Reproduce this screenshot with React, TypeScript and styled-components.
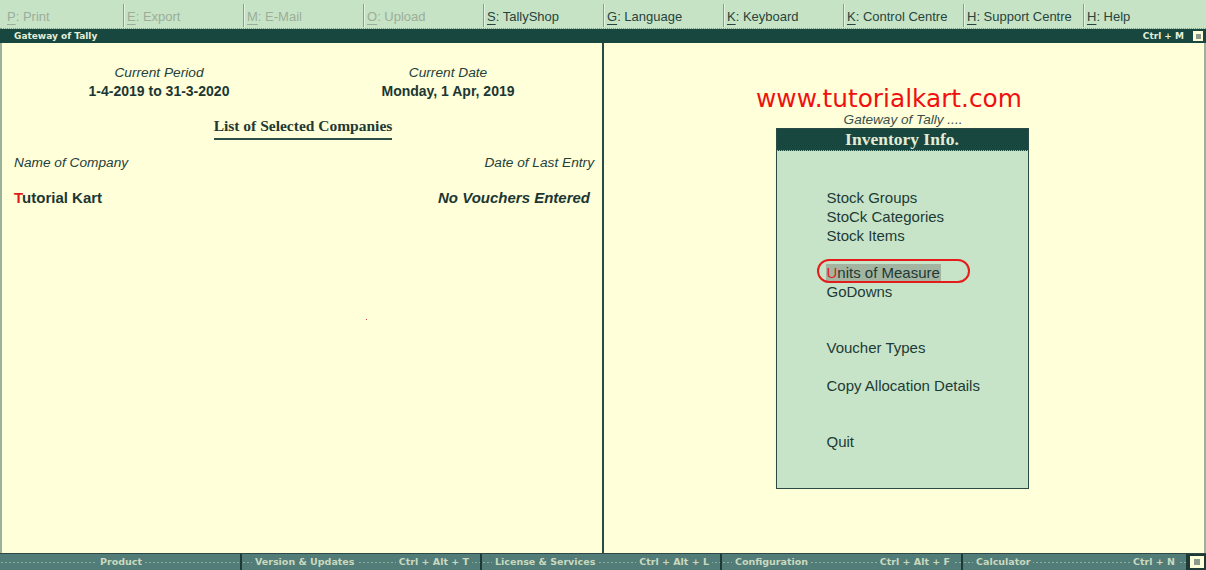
import React from "react";
import styled, { createGlobalStyle } from "styled-components";

const Global = createGlobalStyle`
  html, body { margin: 0; padding: 0; }
  body { width: 1206px; height: 570px; overflow: hidden; background: #ffffd9; font-family: "Liberation Sans", Arial, sans-serif; }
`;

const Screen = styled.div`
  width: 1206px;
  height: 570px;
  display: flex;
  flex-direction: column;
  background: #ffffd9;
`;

const Toolbar = styled.div`
  height: 28px;
  display: flex;
  padding-left: 4px;
  background: #c7e3c5;
  border-bottom: 1px dotted #7d9a80;
  flex: none;
`;

const ToolButton = styled.div<{ $disabled?: boolean; $last?: boolean }>`
  width: 120px;
  box-sizing: border-box;
  display: flex;
  align-items: center;
  padding-left: 3px;
  padding-top: 2px;
  font-size: 13px;
  color: ${(p) => (p.$disabled ? "#9cad9a" : "#27443e")};
  border-right: ${(p) => (p.$last ? "none" : "1px solid #8c9e8a")};
  box-shadow: ${(p) => (p.$last ? "none" : "1px 0 0 #e4f2e2")};
  margin-top: 4px;
  margin-bottom: 1px;
`;

const Key = styled.span`
  text-decoration: underline;
  text-underline-offset: 3px;
`;

const TitleBar = styled.div`
  height: 14px;
  flex: none;
  background: #18473f;
  display: flex;
  align-items: center;
  justify-content: space-between;
  padding: 0 3px 0 14px;
  font-family: "DejaVu Sans", Verdana, sans-serif;
  font-size: 9px;
  font-weight: bold;
  color: #e4eed8;
`;

const TitleRight = styled.div`
  display: flex;
  align-items: center;
  gap: 9px;
`;

const SquareBtn = styled.div`
  width: 10px;
  height: 10px;
  box-sizing: border-box;
  background: #ffffd9;
  display: flex;
  align-items: center;
  justify-content: center;
  &::after {
    content: "";
    width: 5px;
    height: 5px;
    background: #8e9a8e;
  }
`;

const Main = styled.div`
  flex: 1;
  display: flex;
  border-left: 2px solid #9bb29b;
  border-right: 2px solid #9bb29b;
  min-height: 0;
`;

const LeftPanel = styled.div`
  width: 600px;
  flex: none;
  border-right: 2px solid #2a4a44;
  padding-top: 21px;
  color: #1f3a36;
  position: relative;
`;

const InfoGrid = styled.div`
  display: grid;
  grid-template-columns: 314px 264px;
`;

const InfoCell = styled.div`
  display: flex;
  flex-direction: column;
  align-items: center;
`;

const ItalicLabel = styled.div`
  font-size: 13.7px;
  font-style: italic;
  line-height: 18px;
  color: #24403b;
`;

const BoldValue = styled.div`
  font-size: 14px;
  font-weight: bold;
  line-height: 18px;
  color: #1c3733;
`;

const ListTitleRow = styled.div`
  display: flex;
  justify-content: center;
  padding-left: 2px;
  margin-top: 17px;
`;

const ListTitle = styled.div`
  font-family: "Liberation Serif", "Times New Roman", serif;
  font-weight: bold;
  font-size: 15.5px;
  color: #1f3a36;
  line-height: 18px;
  padding-bottom: 3px;
  border-bottom: 2px solid #2c4e46;
`;

const HeaderRow = styled.div`
  display: flex;
  justify-content: space-between;
  padding: 0 8px 0 12px;
  margin-top: 14px;
`;

const CompanyRow = styled.div`
  display: flex;
  justify-content: space-between;
  padding: 0 12px 0 12px;
  margin-top: 16px;
`;

const CompanyName = styled.div`
  font-size: 15px;
  font-weight: bold;
  color: #1c3733;
  line-height: 20px;
`;

const NoVouchers = styled(CompanyName)`
  font-style: italic;
`;

const Red = styled.span`
  color: #e41b1b;
`;

const Speck = styled.div`
  position: absolute;
  left: 364px;
  top: 276px;
  width: 1px;
  height: 1px;
  background: #e04040;
`;

const RightPanel = styled.div`
  flex: 1;
  display: flex;
  flex-direction: column;
  align-items: center;
  padding-top: 43px;
`;

const Url = styled.div`
  font-family: "DejaVu Sans", Verdana, sans-serif;
  font-size: 24.8px;
  color: #f01010;
  line-height: 26px;
  margin-right: 30px;
`;

const Caption = styled.div`
  font-size: 13.6px;
  font-style: italic;
  color: #3a4f4c;
  line-height: 16px;
  margin-right: 2px;
`;

const MenuBox = styled.div`
  width: 253px;
  height: 361px;
  box-sizing: border-box;
  border: 1px solid #2c4a44;
  background: #c7e4c8;
  display: flex;
  flex-direction: column;
  margin-right: 4px;
`;

const MenuHeader = styled.div`
  height: 21px;
  background: #18473f;
  border-bottom: 1px dotted #9fb8a4;
  display: flex;
  align-items: center;
  justify-content: center;
  font-family: "Liberation Serif", "Times New Roman", serif;
  font-weight: bold;
  font-size: 17.5px;
  color: #e6ecd4;
`;

const MenuList = styled.div`
  display: flex;
  flex-direction: column;
  padding: 38px 0 0 50px;
`;

const MenuItem = styled.div<{ $gapBefore?: number; $active?: boolean }>`
  position: relative;
  align-self: flex-start;
  font-size: 15px;
  line-height: 18.8px;
  color: #1d3a36;
  margin-top: ${(p) => (p.$gapBefore ?? 0) * 18.8}px;
  padding: 0 1px;
  margin-left: -1px;
  background: ${(p) => (p.$active ? "#a3b4a0" : "transparent")};
`;

const Annotation = styled.div`
  position: absolute;
  left: -9px;
  top: -5px;
  width: 153px;
  height: 24px;
  border: 2px solid #e41c1c;
  border-radius: 12px;
  box-sizing: border-box;
`;

const BottomBar = styled.div`
  height: 17px;
  flex: none;
  display: flex;
  background: #527c77;
  border-top: 1px solid #2e4a46;
  box-sizing: border-box;
  font-family: "DejaVu Sans", Verdana, sans-serif;
  font-size: 9.5px;
  font-weight: bold;
  color: #c9d9bf;
`;

const BottomSeg = styled.div<{ $w: number; $center?: boolean }>`
  width: ${(p) => p.$w}px;
  box-sizing: border-box;
  display: flex;
  align-items: center;
  justify-content: ${(p) => (p.$center ? "center" : "space-between")};
  padding: 0 8px 1px 10px;
  border-right: 2px solid #1f3a36;
  background-image: radial-gradient(circle, #8fb09a 0.6px, transparent 0.8px);
  background-size: 4px 17px;
  background-position: 0 0;
  white-space: nowrap;
`;

const SegText = styled.span`
  background: #527c77;
  padding: 0 3px;
`;

const BottomSquare = styled.div`
  flex: 1;
  display: flex;
  align-items: center;
  justify-content: center;
  border: 2px solid #1f3a36;
  background: #ffffd9;
  &::after {
    content: "";
    width: 6px;
    height: 6px;
    background: #8e9a8e;
  }
`;

const tools: { k: string; rest: string; disabled?: boolean }[] = [
  { k: "P", rest: ": Print", disabled: true },
  { k: "E", rest: ": Export", disabled: true },
  { k: "M", rest: ": E-Mail", disabled: true },
  { k: "O", rest: ": Upload", disabled: true },
  { k: "S", rest: ": TallyShop" },
  { k: "G", rest: ": Language" },
  { k: "K", rest: ": Keyboard" },
  { k: "K", rest: ": Control Centre" },
  { k: "H", rest: ": Support Centre" },
  { k: "H", rest: ": Help" },
];

export default function App() {
  return (
    <>
      <Global />
      <Screen>
        <Toolbar>
          {tools.map((t, i) => (
            <ToolButton key={i} $disabled={t.disabled} $last={i === tools.length - 1}>
              <Key>{t.k}</Key>
              {t.rest}
            </ToolButton>
          ))}
        </Toolbar>
        <TitleBar>
          <span>Gateway of Tally</span>
          <TitleRight>
            <span>Ctrl + M</span>
            <SquareBtn />
          </TitleRight>
        </TitleBar>
        <Main>
          <LeftPanel>
            <InfoGrid>
              <InfoCell>
                <ItalicLabel>Current Period</ItalicLabel>
                <BoldValue>1-4-2019 to 31-3-2020</BoldValue>
              </InfoCell>
              <InfoCell>
                <ItalicLabel>Current Date</ItalicLabel>
                <BoldValue>Monday, 1 Apr, 2019</BoldValue>
              </InfoCell>
            </InfoGrid>
            <ListTitleRow>
              <ListTitle>List of Selected Companies</ListTitle>
            </ListTitleRow>
            <HeaderRow>
              <ItalicLabel>Name of Company</ItalicLabel>
              <ItalicLabel>Date of Last Entry</ItalicLabel>
            </HeaderRow>
            <CompanyRow>
              <CompanyName>
                <Red>T</Red>utorial Kart
              </CompanyName>
              <NoVouchers>No Vouchers Entered</NoVouchers>
            </CompanyRow>
            <Speck />
          </LeftPanel>
          <RightPanel>
            <Url>www.tutorialkart.com</Url>
            <Caption>Gateway of Tally ....</Caption>
            <MenuBox>
              <MenuHeader>Inventory Info.</MenuHeader>
              <MenuList>
                <MenuItem>Stock Groups</MenuItem>
                <MenuItem>StoCk Categories</MenuItem>
                <MenuItem>Stock Items</MenuItem>
                <MenuItem $gapBefore={1} $active>
                  <Red>U</Red>nits of Measure
                  <Annotation />
                </MenuItem>
                <MenuItem>GoDowns</MenuItem>
                <MenuItem $gapBefore={2}>Voucher Types</MenuItem>
                <MenuItem $gapBefore={1}>Copy Allocation Details</MenuItem>
                <MenuItem $gapBefore={2}>Quit</MenuItem>
              </MenuList>
            </MenuBox>
          </RightPanel>
        </Main>
        <BottomBar>
          <BottomSeg $w={242} $center>
            <SegText>Product</SegText>
          </BottomSeg>
          <BottomSeg $w={240}>
            <SegText>Version &amp; Updates</SegText>
            <SegText>Ctrl + Alt + T</SegText>
          </BottomSeg>
          <BottomSeg $w={240}>
            <SegText>License &amp; Services</SegText>
            <SegText>Ctrl + Alt + L</SegText>
          </BottomSeg>
          <BottomSeg $w={241}>
            <SegText>Configuration</SegText>
            <SegText>Ctrl + Alt + F</SegText>
          </BottomSeg>
          <BottomSeg $w={225}>
            <SegText>Calculator</SegText>
            <SegText>Ctrl + N</SegText>
          </BottomSeg>
          <BottomSquare />
        </BottomBar>
      </Screen>
    </>
  );
}
